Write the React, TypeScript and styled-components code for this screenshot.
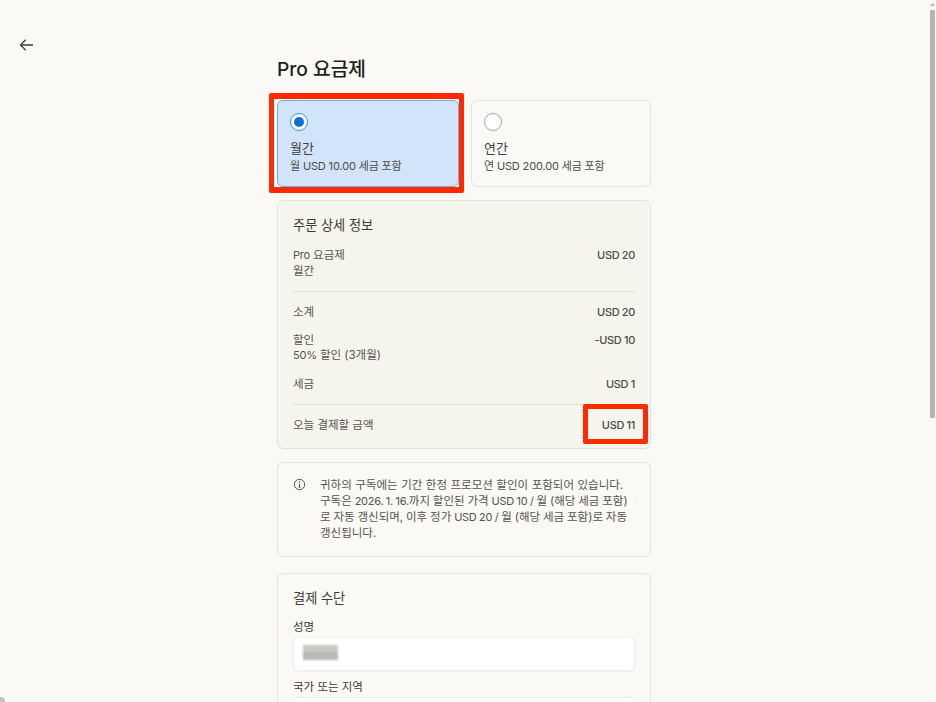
import React from "react";
import styled, { createGlobalStyle } from "styled-components";

const Global = createGlobalStyle`
  html, body { margin: 0; padding: 0; height: 702px; overflow: hidden; background: #faf9f5; }
  body { font-family: Inter, "Noto Sans CJK KR", sans-serif; color: #3d3d3a; }
  * { box-sizing: border-box; }
`;
const Page = styled.div`
  position: relative; width: 936px; height: 702px; overflow: hidden; background: #faf9f5;
`;
const BackButton = styled.button`
  position: absolute; left: 18px; top: 37px; width: 16px; height: 16px; padding: 0; border: 0; background: none; color: #3d3d3a; display: flex;
`;
const Column = styled.main`
  width: 374px; margin-left: 277px; padding-top: 57px; display: flex; flex-direction: column;
`;
const Title = styled.h1`
  margin: 0 0 18px; font-size: 19.2px; line-height: 25px; font-weight: 500; color: #1f1e1d; height: 25px;
`;
const PlanRow = styled.div`
  display: grid; grid-template-columns: 182px 180px; gap: 12px; margin-bottom: 13px;
`;
const PlanCard = styled.div<{ $selected?: boolean }>`
  position: relative; height: 87px; border-radius: 6px; padding: 12px 12px;
  background: ${p => (p.$selected ? "#d1e4f9" : "#faf9f5")};
  border: 1px solid ${p => (p.$selected ? "#72a9e3" : "#e5e3db")};
`;
const Radio = styled.span<{ $selected?: boolean }>`
  display: block; width: 18px; height: 18px; border-radius: 50%; background: #fff;
  border: 1px solid ${p => (p.$selected ? "#3b8fe0" : "#a3a29d")};
  position: relative; margin-bottom: 8px;
  ${p => p.$selected && `&::after { content: ""; position: absolute; left: 3px; top: 3px; width: 10px; height: 10px; border-radius: 50%; background: #0a72d6; }`}
`;
const PlanName = styled.div`
  font-size: 13px; line-height: 18px; color: #3d3d3a;
`;
const PlanPrice = styled.div`
  font-size: 11px; line-height: 16px; color: #4d4c48; margin-top: 1px; letter-spacing: -0.15px;
`;
const Highlight = styled.span`
  position: absolute; border: 5px solid #ff2a00; border-radius: 2px; pointer-events: none;
`;
const PlanHighlight = styled(Highlight)`
  left: -9px; top: -8px; width: 195px; height: 100px; border-width: 6px 5px;
`;
const TotalHighlight = styled(Highlight)`
  right: 2px; bottom: 4px; width: 65px; height: 40px;
`;
const Summary = styled.section`
  position: relative; height: 249px; border: 1px solid #e5e3db; border-radius: 6px; background: #f5f4ed; padding: 15px 15px 0; margin-bottom: 13px;
`;
const SectionTitle = styled.h2`
  margin: 0; font-size: 13.2px; line-height: 18px; font-weight: 400; color: #3d3d3a;
`;
const Row = styled.div<{ $mt?: number }>`
  display: flex; justify-content: space-between; font-size: 11.5px; line-height: 15.5px; color: #55544f; margin-top: ${p => p.$mt ?? 0}px;
`;
const Amount = styled.span`
  font-size: 11px; color: #4d4c48; font-weight: 500; letter-spacing: -0.35px;
`;
const Divider = styled.hr<{ $mt: number }>`
  margin: ${p => p.$mt}px 0 0; border: 0; border-top: 1px solid #dedcd3;
`;
const Notice = styled.section`
  height: 95px; border: 1px solid #e5e3db; border-radius: 6px; padding: 14px 15px; display: flex; gap: 14px; margin-bottom: 16px;
`;
const NoticeIcon = styled.span`
  flex: none; width: 13px; height: 13px; margin-top: 1px; color: #55544f; display: flex;
`;
const NoticeText = styled.p`
  margin: 0; font-size: 11.5px; line-height: 16px; color: #55544f; width: 318px; white-space: nowrap;
`;
const NoticeLine = styled.span<{ $wordSpacing?: number }>`
  display: block; word-spacing: ${p => p.$wordSpacing ?? 0}px;
`;
const Latin = styled.span`
  font-size: 11px; letter-spacing: -0.25px;
`;
const Payment = styled.section`
  height: 200px; border: 1px solid #e5e3db; border-radius: 6px; padding: 15px;
`;
const FieldLabel = styled.div<{ $mt?: number }>`
  font-size: 11.5px; line-height: 16px; color: #3d3d3a; margin-top: ${p => p.$mt ?? 0}px; margin-bottom: 2px;
`;
const Input = styled.div`
  height: 34px; border: 1px solid #f0efe9; border-radius: 5px; background: #fff; padding: 7px 9px; box-shadow: 0 1px 2px rgba(0, 0, 0, 0.03);
`;
const Redacted = styled.div`
  width: 35px; height: 15px; filter: blur(1px);
  background: linear-gradient(#c9c8c5 0 50%, #b9b8b5 50%);
`;
const VScrollThumb = styled.div`
  position: absolute; left: 930px; top: 10px; width: 5px; height: 408px; background: #b5b4ae; border-radius: 1px;
`;
const ScrollArrow = styled.div`
  position: absolute; left: 930px; top: 3px; width: 5px; height: 3px; background: #b8b7b1;
  clip-path: polygon(50% 0, 100% 100%, 0 100%);
`;
const HScrollThumb = styled.div`
  position: absolute; left: 0; bottom: 0; width: 5px; height: 5px; background: #c4c3be; border-top-right-radius: 4px;
`;

const App: React.FC = () => (
  <Page>
    <Global />
    <BackButton aria-label="뒤로">
      <svg width="16" height="16" viewBox="0 0 16 16" fill="none" stroke="currentColor" strokeWidth="1.3">
        <path d="M15 8H2.5M7.7 2.8 2.5 8l5.2 5.2" />
      </svg>
    </BackButton>
    <Column>
      <Title>Pro 요금제</Title>
      <PlanRow>
        <PlanCard $selected>
          <Radio $selected />
          <PlanName>월간</PlanName>
          <PlanPrice>월 USD 10.00 세금 포함</PlanPrice>
          <PlanHighlight />
        </PlanCard>
        <PlanCard>
          <Radio />
          <PlanName>연간</PlanName>
          <PlanPrice>연 USD 200.00 세금 포함</PlanPrice>
        </PlanCard>
      </PlanRow>
      <Summary>
        <SectionTitle>주문 상세 정보</SectionTitle>
        <Row $mt={14}>
          <span><Latin>Pro</Latin> 요금제<br />월간</span>
          <Amount>USD 20</Amount>
        </Row>
        <Divider $mt={12} />
        <Row $mt={13}><span>소계</span><Amount>USD 20</Amount></Row>
        <Row $mt={12}>
          <span>할인<br /><Latin>50%</Latin> 할인 (3개월)</span>
          <Amount>-USD 10</Amount>
        </Row>
        <Row $mt={13}><span>세금</span><Amount>USD 1</Amount></Row>
        <Divider $mt={12} />
        <Row $mt={13}><span>오늘 결제할 금액</span><Amount>USD 11</Amount></Row>
        <TotalHighlight />
      </Summary>
      <Notice>
        <NoticeIcon>
          <svg width="13" height="13" viewBox="0 0 13 13" fill="none" stroke="currentColor" strokeWidth="1">
            <circle cx="6.5" cy="6.5" r="5.2" />
            <path d="M6.5 5.8v3.4M5.6 9.2h1.8" />
            <circle cx="6.5" cy="3.9" r=".4" fill="currentColor" />
          </svg>
        </NoticeIcon>
        <NoticeText>
          <NoticeLine $wordSpacing={0.3}>귀하의 구독에는 기간 한정 프로모션 할인이 포함되어 있습니다.</NoticeLine>
          <NoticeLine $wordSpacing={-0.35}>구독은 <Latin>2026. 1. 16.</Latin>까지 할인된 가격 <Latin>USD 10 /</Latin> 월 (해당 세금 포함)</NoticeLine>
          <NoticeLine $wordSpacing={-0.35}>로 자동 갱신되며, 이후 정가 <Latin>USD 20 /</Latin> 월 (해당 세금 포함)로 자동</NoticeLine>
          <NoticeLine>갱신됩니다.</NoticeLine>
        </NoticeText>
      </Notice>
      <Payment>
        <SectionTitle>결제 수단</SectionTitle>
        <FieldLabel $mt={12}>성명</FieldLabel>
        <Input><Redacted /></Input>
        <FieldLabel $mt={8}>국가 또는 지역</FieldLabel>
        <Input />
      </Payment>
    </Column>
    <ScrollArrow />
    <VScrollThumb />
    <HScrollThumb />
  </Page>
);

export default App;
